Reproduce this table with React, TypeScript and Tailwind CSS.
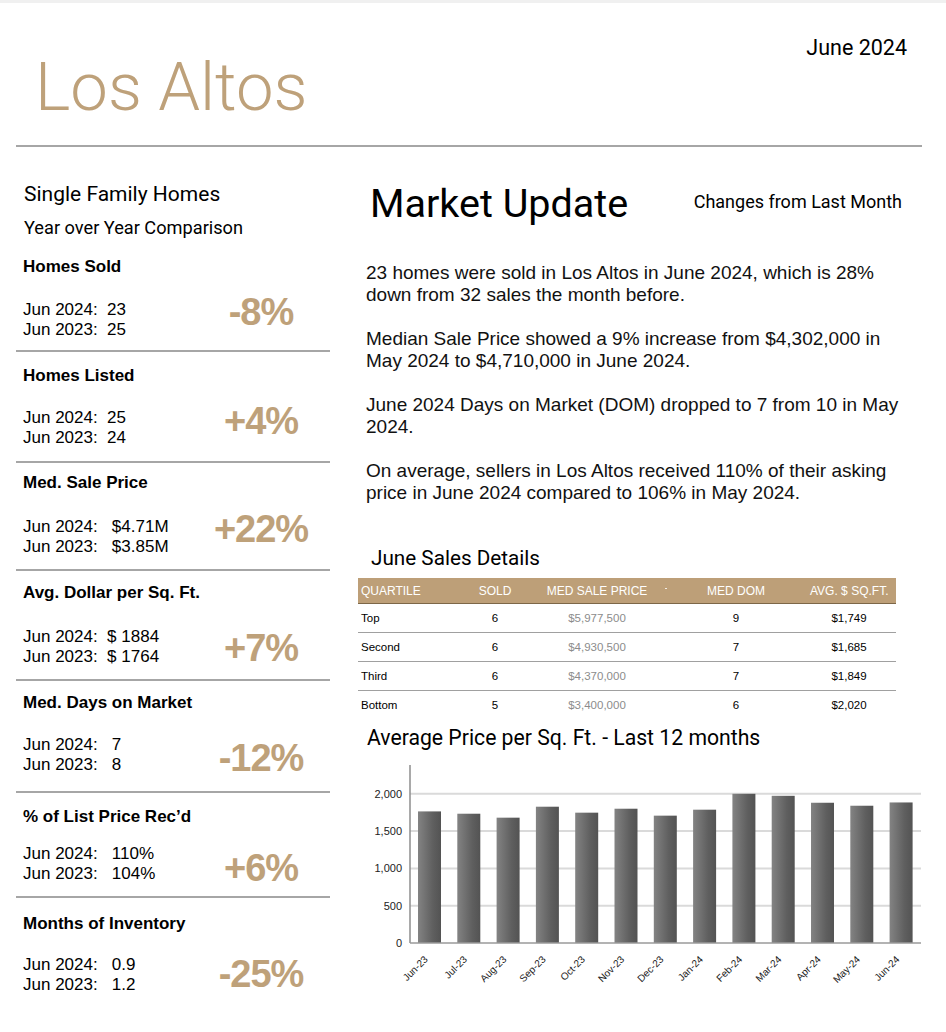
import React from 'react';

const head = "font-['Roboto',sans-serif]";

const stats = [
  { title: 'Homes Sold', a: 'Jun 2024:  23', b: 'Jun 2023:  25', pct: '-8%', box: 'pt-[20px]', gap: 'mt-[23px]', pb: 'pb-[10px]', off: '-mt-[7px]' },
  { title: 'Homes Listed', a: 'Jun 2024:  25', b: 'Jun 2023:  24', pct: '+4%', box: 'pt-[14px]', gap: 'mt-[22px]', pb: 'pb-[13px]', off: '-mt-[6px]' },
  { title: 'Med. Sale Price', a: 'Jun 2024:   $4.71M', b: 'Jun 2023:   $3.85M', pct: '+22%', box: 'pt-[10px]', gap: 'mt-[24px]', pb: 'pb-[12px]', off: '-mt-[7px]' },
  { title: 'Avg. Dollar per Sq. Ft.', a: 'Jun 2024:  $ 1884', b: 'Jun 2023:  $ 1764', pct: '+7%', box: 'pt-[12px]', gap: 'mt-[24px]', pb: 'pb-[12px]', off: 'mt-[2px]' },
  { title: 'Med. Days on Market', a: 'Jun 2024:   7', b: 'Jun 2023:   8', pct: '-12%', box: 'pt-[12px]', gap: 'mt-[22px]', pb: 'pb-[16px]', off: 'mt-[4px]' },
  { title: '% of List Price Rec\u2019d', a: 'Jun 2024:   110%', b: 'Jun 2023:   104%', pct: '+6%', box: 'pt-[14px]', gap: 'mt-[17px]', pb: 'pb-[12px]', off: 'mt-[5px]' },
  { title: 'Months of Inventory', a: 'Jun 2024:   0.9', b: 'Jun 2023:   1.2', pct: '-25%', box: 'pt-[16px]', gap: 'mt-[21px]', pb: 'pb-[0px]', off: 'mt-[0px]' },
];

const quartiles = [
  { q: 'Top', sold: '6', price: '$5,977,500', dom: '9', sqft: '$1,749' },
  { q: 'Second', sold: '6', price: '$4,930,500', dom: '7', sqft: '$1,685' },
  { q: 'Third', sold: '6', price: '$4,370,000', dom: '7', sqft: '$1,849' },
  { q: 'Bottom', sold: '5', price: '$3,400,000', dom: '6', sqft: '$2,020' },
];

const months = ['Jun-23', 'Jul-23', 'Aug-23', 'Sep-23', 'Oct-23', 'Nov-23', 'Dec-23', 'Jan-24', 'Feb-24', 'Mar-24', 'Apr-24', 'May-24', 'Jun-24'];
const values = [1764, 1733, 1680, 1827, 1747, 1800, 1707, 1787, 2000, 1973, 1880, 1840, 1884];

const cols = 'grid grid-cols-[100px_74px_130px_148px_78px_8px] whitespace-nowrap';

function PriceChart() {
  const axisX = 52;
  const base = 184;
  const right = 563;
  const k = 37.3 / 500;
  const slot = 39.3;
  const barW = 23;
  return (
    <svg width="568" height="245" className="block">
      <defs>
        <linearGradient id="bar" x1="0" x2="1" y1="0" y2="0">
          <stop offset="0" stopColor="#838383" />
          <stop offset="0.65" stopColor="#5f5f5f" />
          <stop offset="1" stopColor="#535353" />
        </linearGradient>
      </defs>
      {[500, 1000, 1500, 2000].map((v) => (
        <line key={v} x1={axisX} x2={right} y1={base - v * k} y2={base - v * k} stroke="#dadada" strokeWidth="2" />
      ))}
      {[0, 500, 1000, 1500, 2000].map((v) => (
        <text key={v} x={axisX - 8} y={base - v * k + 4} textAnchor="end" fontSize="11" fill="#222" fontFamily="Liberation Sans, Arial, sans-serif">
          {v.toLocaleString('en-US')}
        </text>
      ))}
      {values.map((v, i) => {
        const x = 60 + i * slot;
        const h = v * k;
        return <rect key={i} x={x} y={base - h} width={barW} height={h} fill="url(#bar)" />;
      })}
      <line x1={axisX} x2={axisX} y1={6} y2={base} stroke="#8c8c8c" strokeWidth="1.5" />
      <line x1={axisX} x2={right} y1={base} y2={base} stroke="#9a9a9a" strokeWidth="1.5" />
      {months.map((m, i) => {
        const cx = 60 + i * slot + barW / 2 - 1;
        return (
          <text key={m} transform={`translate(${cx} 201) rotate(-45)`} textAnchor="end" fontSize="10" fill="#1a1a1a" fontFamily="Liberation Sans, Arial, sans-serif">
            {m}
          </text>
        );
      })}
    </svg>
  );
}

export default function App() {
  return (
    <div className="relative w-[946px] min-h-[1032px] bg-white text-black font-['Liberation_Sans',Arial,sans-serif]">
      <div className="h-[3px] bg-[#f0f0f0]" />

      <div className="flex justify-between h-[142px]">
        <div className={`pl-[35px] pt-[51px] text-[67px] leading-none font-light text-[#bea17a] ${head}`}>Los Altos</div>
        <div className={`pr-[39px] pt-[34px] text-[21.5px] leading-none ${head}`}>June 2024</div>
      </div>
      <div className="ml-[16px] mr-[24px] h-[2px] bg-[#a6a6a6]" />

      <div className="flex pl-[16px]">
        {/* left column */}
        <div className="w-[314px] flex flex-col">
          <div className={`pl-[8px] pt-[37px] text-[21px] leading-none ${head}`}>Single Family Homes</div>
          <div className={`pl-[8px] pt-[14px] text-[18.2px] leading-none ${head}`}>Year over Year Comparison</div>
          {stats.map((s, i) => (
            <div key={s.title} className={`${s.box} ${s.pb} ${i < stats.length - 1 ? 'border-b-2 border-[#a6a6a6]' : ''}`}>
              <div className="pl-[7px] text-[17px] leading-[20px] font-bold">{s.title}</div>
              <div className={`${s.gap} flex items-start h-[40px]`}>
                <div className="pl-[7px] flex-1 text-[17px] leading-[20px] whitespace-pre">
                  <div>{s.a}</div>
                  <div>{s.b}</div>
                </div>
                <div className={`${s.off} w-[120px] mr-[9px] text-center text-[38px] leading-none font-bold tracking-[-1px] text-[#bea17a]`}>
                  {s.pct}
                </div>
              </div>
            </div>
          ))}
        </div>

        {/* right column */}
        <div className="ml-[28px] w-[564px] flex flex-col">
          <div className="flex justify-between items-start whitespace-nowrap">
            <div className={`pl-[12px] pt-[37px] text-[39.5px] leading-none ${head}`}>Market Update</div>
            <div className={`pr-[20px] pt-[46px] text-[18px] leading-none ${head}`}>Changes from Last Month</div>
          </div>

          <div className="pl-[8px] pt-[38px] text-[19px] leading-[22px] text-[#111] whitespace-nowrap flex flex-col gap-[22px]">
            <p>23 homes were sold in Los Altos in June 2024, which is 28%<br />down from 32 sales the month before.</p>
            <p>Median Sale Price showed a 9% increase from $4,302,000 in<br />May 2024 to $4,710,000 in June 2024.</p>
            <p>June 2024 Days on Market (DOM) dropped to 7 from 10 in May<br />2024.</p>
            <p>On average, sellers in Los Altos received 110% of their asking<br />price in June 2024 compared to 106% in May 2024.</p>
          </div>

          <div className={`pl-[13px] pt-[44px] text-[20.7px] leading-none ${head}`}>June Sales Details</div>

          <div className="mt-[10px] w-[538px]">
            <div className={`${cols} h-[26px] items-center bg-[#bd9f78] border-b border-[#7d6748] text-white text-[12px]`}>
              <div className="pl-[3px]">QUARTILE</div>
              <div className="text-center">SOLD</div>
              <div className="text-center">MED SALE PRICE</div>
              <div className="relative text-center">
                <span className="absolute left-[3px] top-[6px] w-[2px] h-[1px] bg-[#f4ede3]" />
                MED DOM
              </div>
              <div className="text-center">AVG. $ SQ.FT.</div>
              <div />
            </div>
            {quartiles.map((r, i) => (
              <div key={r.q} className={`${cols} h-[29px] items-center text-[11.5px] ${i < quartiles.length - 1 ? 'border-b border-[#a0a0a0]' : ''}`}>
                <div className="pl-[3px]">{r.q}</div>
                <div className="text-center">{r.sold}</div>
                <div className="text-center text-[#8c8c8c]">{r.price}</div>
                <div className="text-center">{r.dom}</div>
                <div className="text-center">{r.sqft}</div>
                <div />
              </div>
            ))}
          </div>

          <div className={`pl-[9px] pt-[7px] text-[21.2px] leading-none ${head}`}>Average Price per Sq. Ft. - Last 12 months</div>
          <div className="mt-[11px]">
            <PriceChart />
          </div>
        </div>
      </div>
    </div>
  );
}
